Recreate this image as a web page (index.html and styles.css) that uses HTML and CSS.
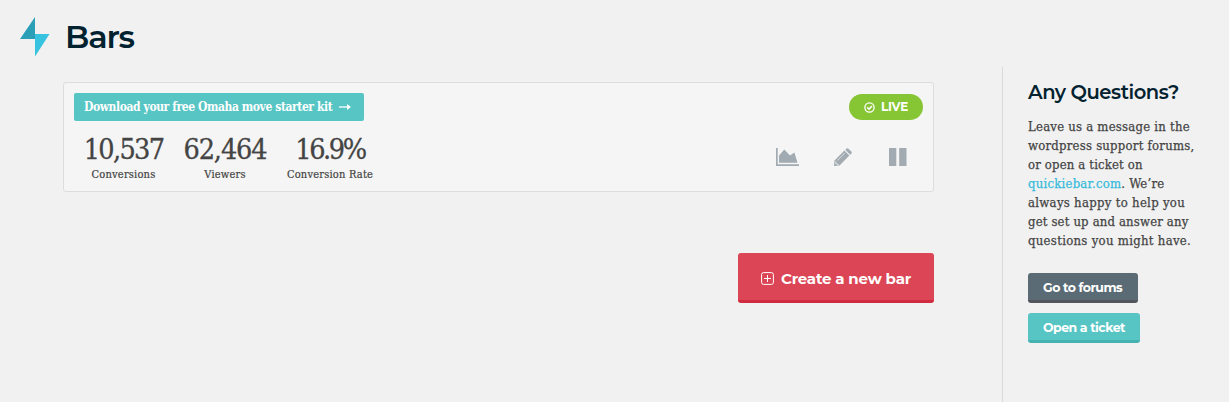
FILE: index.html
```html
<!DOCTYPE html>
<html lang="en">
<head>
<meta charset="utf-8">
<title>Bars</title>
<link rel="stylesheet" href="styles.css">
</head>
<body>
<div class="page">
  <main class="main">
    <header class="header">
      <svg class="logo" width="30" height="40" viewBox="0 0 30 40"><path d="M15 0V22H0Z" fill="#2b9fb8"/><path d="M15 17H29.500L15 39.500Z" fill="#37c2e0"/></svg>
      <h1 class="title">Bars</h1>
    </header>
    <section class="card">
      <div class="details">
        <div class="preview"><span class="preview-text">Download your free Omaha move starter kit</span>
          <svg width="12" height="8" viewBox="0 0 12 8"><path d="M0 4H9" stroke="#fff" stroke-width="1.300"/><path d="M8 1L12 4L8 7Z" fill="#fff"/></svg>
        </div>
        <div class="stats">
          <div class="stat conversions"><div class="value">10,537</div><div class="label">Conversions</div></div>
          <div class="stat viewers"><div class="value">62,464</div><div class="label">Viewers</div></div>
          <div class="stat rate"><div class="value">16.9%</div><div class="label">Conversion Rate</div></div>
        </div>
      </div>
      <div class="controls">
        <div class="status">
          <svg width="11" height="11" viewBox="0 0 11 11" fill="none" stroke="#fff"><circle cx="5.500" cy="5.500" r="4.600" stroke-width="1.300"/><path d="M3.200 5.400L5 7.100L8 4" stroke-width="1.500"/></svg>
          <span class="status-text">LIVE</span>
        </div>
        <div class="actions">
          <svg width="24" height="18" viewBox="0 0 24 18" fill="#a1abb1"><path d="M0 0H1.700V16.200H23V18H0Z"/><path d="M3 14.700V7.500L8.300 1.500L14 7.600L18.400 4.500L21.500 14.700Z"/></svg>
          <svg class="pencil" width="18" height="18" viewBox="0 0 18 18" fill="#a1abb1"><path d="M0 18L.5 12.500L10.400 2.600L15.400 7.600L5.500 17.500Z"/><path d="M11.300 1.700L12.500.5Q13.500-.3 14.500.7L17.300 3.500Q18.200 4.500 17.400 5.500L16.200 6.700Z"/><path d="M3.300 12.500L10.900 4.900M1.500 13.500V15.200H3V16.600H4.700" fill="none" stroke="#f5f5f5" stroke-width=".7"/></svg>
          <svg width="18" height="18" viewBox="0 0 18 18" fill="#a1abb1"><path d="M0 0H7.300V18H0ZM10.200 0H17.500V18H10.200Z"/></svg>
        </div>
      </div>
    </section>
    <a class="button create">
      <svg width="13" height="13" viewBox="0 0 13 13" fill="none" stroke="#fff" stroke-width="1"><rect x=".6" y=".6" width="11.800" height="11.800" rx="2"/><path d="M6.500 3V10M3 6.500H10"/></svg>
      <span class="create-text">Create a new bar</span>
    </a>
  </main>
  <aside class="sidebar">
    <h2 class="subtitle">Any Questions?</h2>
    <p class="copy">Leave us a message in the<br>wordpress support forums,<br><span class="snug">or open a ticket on</span><br><a class="link">quickiebar.com</a>. We’re<br><span class="wide">always happy to help you</span><br><span class="snug">get set up and answer any</span><br><span class="wide">questions you might have.</span></p>
    <a class="button forums">Go to forums</a>
    <a class="button ticket">Open a ticket</a>
  </aside>
</div>
</body>
</html>
```
FILE: styles.css
```css
* { box-sizing: border-box; }
body {
  margin: 0;
  background: #f1f1f1;
  color: #444;
  font-family: "Roboto Slab", "DejaVu Serif Condensed", "DejaVu Serif", serif;
  overflow: hidden;
}
svg { display: block; flex: none; }
.page { display: flex; height: 402px; }
.main { width: 934px; display: flex; flex-direction: column; }
.header { display: flex; gap: 15px; height: 82px; padding: 17px 0 0 20px; }
.title, .subtitle, .button, .status { font-family: Montserrat, Inter, sans-serif; }
.title { margin: 0; color: #032230; font-size: 32px; line-height: 40px; font-weight: 600; letter-spacing: -1.2px; }
.card {
  display: flex;
  justify-content: space-between;
  height: 110px;
  margin-left: 63px;
  padding: 10px;
  background: #f5f5f5;
  border: 1px solid #ddd;
  border-radius: 3px;
}
.preview {
  display: flex;
  align-items: center;
  gap: 7px;
  width: 290px;
  height: 28px;
  padding-left: 10px;
  background: #57c5c4;
  border-radius: 2px;
  color: #fff;
  font-size: 12px;
  font-weight: 700;
  white-space: nowrap;
}
.preview-text { width: 248px; letter-spacing: -.42px; }
.stats { display: flex; gap: 20px; padding: 10px 0 0 10px; }
.stat { display: flex; flex-direction: column; align-items: center; white-space: nowrap; }
.conversions { width: 79px; }
.viewers { width: 84px; }
.rate { width: 86px; }
.value { font-size: 28.5px; line-height: 37px; letter-spacing: -1.7px; -webkit-text-stroke: .3px #444; }
.viewers .value { letter-spacing: -1.1px; }
.rate .value { letter-spacing: -2.4px; }
.label { font-size: 11px; line-height: 14px; letter-spacing: .2px; -webkit-text-stroke: .2px #444; }
.controls { display: flex; flex-direction: column; align-items: flex-end; }
.status {
  display: flex;
  align-items: center;
  gap: 6px;
  width: 74px;
  height: 26px;
  margin-top: 1px;
  padding-left: 15px;
  border-radius: 13px;
  background: #86c534;
  color: #fff;
  font-size: 12px;
  font-weight: 700;
  letter-spacing: -.2px;
}
.status-text { margin-top: -1px; }
.actions { display: flex; padding: 28px 16px 0 0; }
.pencil { margin: 0 37px 0 34px; }
.button { display: flex; align-items: center; color: #fff; font-weight: 700; border-radius: 3px; white-space: nowrap; }
.create {
  align-self: flex-end;
  gap: 7px;
  width: 196px;
  height: 50px;
  margin-top: 61px;
  padding: 3px 0 0 23px;
  background: #dc4555;
  border-bottom: 3px solid #cf2a3e;
  font-size: 15px;
  letter-spacing: -.2px;
}
.create-text { padding-top: 1px; }
.sidebar { width: 227px; margin: 67px 0 0 68px; padding: 12px 0 0 25px; border-left: 1px solid #dadada; }
.subtitle { margin: 0; color: #032230; font-size: 19.5px; line-height: 26px; font-weight: 600; letter-spacing: -.45px; white-space: nowrap; }
.copy { margin: 12px 0 23px; font-size: 13px; line-height: 19px; letter-spacing: .23px; white-space: nowrap; -webkit-text-stroke: .25px; }
.snug { letter-spacing: .16px; }
.wide { letter-spacing: .3px; }
.link { color: #37bbda; }
.forums, .ticket { height: 30px; padding: 2px 0 0 15px; font-size: 12.5px; letter-spacing: -.48px; }
.forums { width: 110px; background: #5a6b75; border-bottom: 3px solid #52555c; }
.ticket { width: 112px; margin-top: 10px; background: #57c5c4; border-bottom: 3px solid #43b2b1; }
```
